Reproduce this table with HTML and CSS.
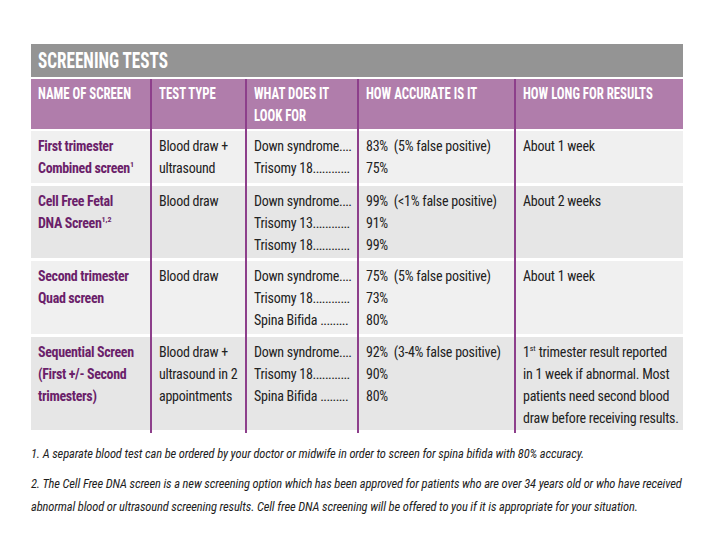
FILE: index.html
```html
<!DOCTYPE html>
<html>
<head>
<meta charset="utf-8">
<link rel="stylesheet" href="styles.css">
</head>
<body>
<div class="sheet">
  <div class="title"><span class="squeeze">SCREENING TESTS</span></div>
  <div class="table">
    <div class="row head">
      <div class="cell"><span class="squeeze">NAME OF SCREEN</span></div>
      <div class="cell"><span class="squeeze">TEST TYPE</span></div>
      <div class="cell"><span class="squeeze">WHAT DOES IT<br>LOOK FOR</span></div>
      <div class="cell"><span class="squeeze">HOW ACCURATE IS IT</span></div>
      <div class="cell"><span class="squeeze">HOW LONG FOR RESULTS</span></div>
    </div>
    <div class="row light r1">
      <div class="cell name">First trimester<br>Combined screen<sup>1</sup></div>
      <div class="cell">Blood draw +<br>ultrasound</div>
      <div class="cell">Down syndrome<span class="dots">....</span><br>Trisomy 18<span class="dots">............</span></div>
      <div class="cell">83%&nbsp; (5% false positive)<br>75%</div>
      <div class="cell">About 1 week</div>
    </div>
    <div class="row dark r2">
      <div class="cell name">Cell Free Fetal<br>DNA Screen<sup>1,2</sup></div>
      <div class="cell">Blood draw</div>
      <div class="cell">Down syndrome<span class="dots">....</span><br>Trisomy 13<span class="dots">............</span><br>Trisomy 18<span class="dots">............</span></div>
      <div class="cell">99%&nbsp; (&lt;1% false positive)<br>91%<br>99%</div>
      <div class="cell">About 2 weeks</div>
    </div>
    <div class="row light r3">
      <div class="cell name">Second trimester<br>Quad screen</div>
      <div class="cell">Blood draw</div>
      <div class="cell">Down syndrome<span class="dots">....</span><br>Trisomy 18<span class="dots">............</span><br>Spina Bifida <span class="dots">.........</span></div>
      <div class="cell">75%&nbsp; (5% false positive)<br>73%<br>80%</div>
      <div class="cell">About 1 week</div>
    </div>
    <div class="row dark r4">
      <div class="cell name">Sequential Screen<br>(First +/- Second<br>trimesters)</div>
      <div class="cell">Blood draw +<br>ultrasound in 2<br>appointments</div>
      <div class="cell">Down syndrome<span class="dots">....</span><br>Trisomy 18<span class="dots">............</span><br>Spina Bifida <span class="dots">.........</span></div>
      <div class="cell">92%&nbsp; (3-4% false positive)<br>90%<br>80%</div>
      <div class="cell">1<sup>st</sup> trimester result reported<br>in 1 week if abnormal. Most<br>patients need second blood<br>draw before receiving results.</div>
    </div>
  </div>
  <div class="notes">
    <p class="n1">1. A separate blood test can be ordered by your doctor or midwife in order to screen for spina bifida with 80% accuracy.</p>
    <p class="n2">2. The Cell Free DNA screen is a new screening option which has been approved for patients who are over 34 years old or who have received<br>abnormal blood or ultrasound screening results. Cell free DNA screening will be offered to you if it is appropriate for your situation.</p>
  </div>
</div>
</body>
</html>
```
FILE: styles.css
```css
html, body {
  margin: 0;
  padding: 0;
  background: #ffffff;
}
body {
  font-family: "Roboto Condensed", "Open Sans", sans-serif;
  font-stretch: 75%;
  color: #222222;
}
.sheet {
  margin: 44px 0 0 31px;
  width: 652px;
}
.squeeze {
  display: inline-block;
  transform-origin: 0 50%;
  white-space: nowrap;
}
.title {
  height: 33px;
  line-height: 34px;
  background: #949494;
  color: #ffffff;
  font-weight: bold;
  font-size: 22px;
  padding-left: 7px;
  margin-bottom: 2px;
}
.title .squeeze {
  transform: scaleX(0.78);
}
.table {
  background-color: #ffffff;
  background-image:
    linear-gradient(to right, transparent 119px, #8d3f8b 119px, #8d3f8b 121px, transparent 121px),
    linear-gradient(to right, transparent 214px, #8d3f8b 214px, #8d3f8b 216px, transparent 216px),
    linear-gradient(to right, transparent 326px, #8d3f8b 326px, #8d3f8b 328px, transparent 328px),
    linear-gradient(to right, transparent 483px, #8d3f8b 483px, #8d3f8b 485px, transparent 485px);
  padding-bottom: 3px;
}
.row {
  display: grid;
  grid-template-columns: 119px 95px 112px 157px 169px;
  margin-bottom: 3px;
}
.cell {
  padding: 4px 0 0 7px;
  font-size: 14px;
  line-height: 22px;
  letter-spacing: -0.25px;
  white-space: nowrap;
  border-left: 2px solid #8d3f8b;
}
.cell:first-child {
  border-left: none;
}
.dots {
  letter-spacing: -0.6px;
}
.head {
  background: #b07dab;
  height: 50px;
  margin-bottom: 2px;
}
.head .cell {
  color: #ffffff;
  font-weight: bold;
  font-size: 16px;
  letter-spacing: 0;
}
.head .squeeze {
  transform: scaleX(0.8);
}
.light { background: #f0f0f0; }
.dark { background: #e6e6e6; }
.r1 { height: 52px; }
.r2 { height: 72px; }
.r3 { height: 73px; }
.r4 { height: 93px; margin-bottom: 0; }
.name {
  color: #6b1f6a;
  font-weight: bold;
  letter-spacing: -0.35px;
}
sup {
  font-size: 8px;
  line-height: 0;
  vertical-align: 6px;
  letter-spacing: 0;
}
.notes {
  padding-top: 9px;
}
.notes p {
  margin: 0;
  font-style: italic;
  font-size: 12.5px;
  letter-spacing: -0.13px;
  line-height: 23px;
  color: #1e1e1e;
  white-space: nowrap;
}
.notes .n1 {
  margin-bottom: 7px;
}
```
